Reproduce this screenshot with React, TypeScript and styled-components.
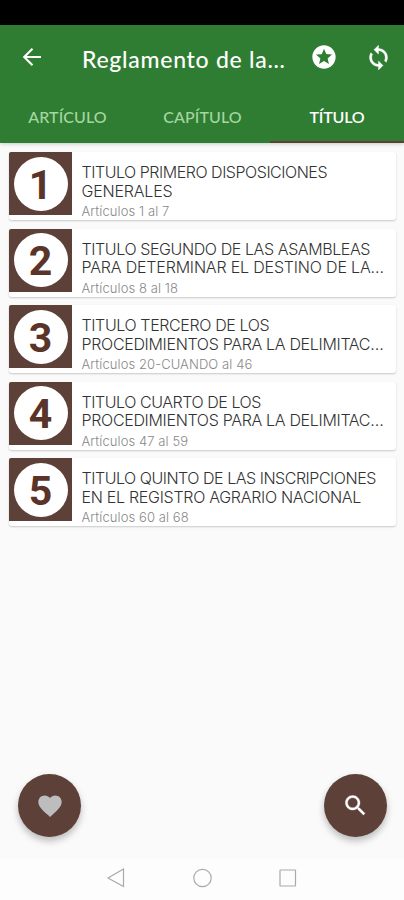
import React from 'react';
import styled, { createGlobalStyle } from 'styled-components';

const GlobalStyle = createGlobalStyle`
  * { box-sizing: border-box; }
  body { margin: 0; background: #fafafa; }
`;

const Screen = styled.div`
  width: 404px;
  height: 900px;
  display: flex;
  flex-direction: column;
  overflow: hidden;
  background: #fafafa;
  font-family: Inter, sans-serif;
`;

const StatusBar = styled.div`
  height: 25px;
  flex: none;
  background: #000;
`;

const Header = styled.header`
  height: 118px;
  flex: none;
  background: #2f7d32;
  color: #fff;
  box-shadow: 0 1px 4px rgba(0, 0, 0, 0.2);
`;

const Toolbar = styled.div`
  height: 64px;
  display: flex;
  align-items: center;
  justify-content: flex-start;
  padding-left: 20px;
`;

const Title = styled.h1`
  width: 218px;
  flex: none;
  margin: 3px 0 0 38px;
  font: 500 23px/30px Lato, sans-serif;
  letter-spacing: 0.72px;
  white-space: nowrap;
`;

const IconButton = styled.button<{ $gap?: number }>`
  display: flex;
  flex: none;
  padding: 0;
  margin: 0 0 0 ${(p) => p.$gap ?? 0}px;
  border: 0;
  background: none;
  color: inherit;
`;

const Tabs = styled.nav`
  height: 54px;
  display: grid;
  grid-template-columns: 135px 135px 134px;
`;

const Tab = styled.div<{ $active?: boolean }>`
  display: flex;
  align-items: center;
  justify-content: center;
  border-bottom: 2px solid ${(p) => (p.$active ? '#5d4037' : 'transparent')};
  color: ${(p) => (p.$active ? '#fff' : '#a5d6a0')};
  font: ${(p) => (p.$active ? 600 : 500)} 16px/20px Lato, sans-serif;
  letter-spacing: ${(p) => (p.$active ? '-0.2px' : '0.1px')};
  padding-top: 3px;
`;

const List = styled.main`
  flex: 1;
  display: flex;
  flex-direction: column;
  gap: 8.5px;
  padding: 9px 8px 0 9px;
`;

const Card = styled.article`
  height: 68px;
  flex: none;
  display: flex;
  background: #fff;
  border-radius: 3px;
  box-shadow: 0 1px 2px rgba(0, 0, 0, 0.2);
`;

const Badge = styled.div`
  width: 63px;
  height: 63px;
  flex: none;
  display: grid;
  place-items: center;
  background: #5d4037;
  border-radius: 2px 0 0 0;
`;

const Disc = styled.div`
  width: 54px;
  height: 54px;
  border-radius: 50%;
  background: #fff;
  color: #5a3329;
  text-align: center;
  font: 700 41px/56px Roboto, sans-serif;
`;

const CardText = styled.div`
  padding: 11px 0 0 9.5px;
  white-space: nowrap;
`;

const Line = styled.div<{ $track: number }>`
  color: #333;
  font-weight: 300;
  font-size: 16px;
  line-height: 18.6px;
  letter-spacing: ${(p) => p.$track}px;
`;

const Range = styled.div`
  margin-top: 2px;
  color: #888;
  font-weight: 300;
  font-size: 13px;
  line-height: 18px;
  letter-spacing: 0.09px;
`;

const Actions = styled.div`
  height: 85px;
  flex: none;
  display: flex;
  justify-content: space-between;
  padding: 0 17px 0 18px;
`;

const Fab = styled.button`
  width: 63px;
  height: 63px;
  padding: 0;
  display: grid;
  place-items: center;
  border: 0;
  border-radius: 50%;
  background: #5d4037;
  box-shadow: 0 4px 7px rgba(0, 0, 0, 0.25);
`;

const NavBar = styled.footer`
  height: 41px;
  flex: none;
  display: flex;
  justify-content: center;
  gap: 66px;
  padding-top: 9px;
  background: #fdfdfd;
`;

type Line = [text: string, track: number];

const items: { lines: Line[]; range: string }[] = [
  { lines: [['TITULO PRIMERO DISPOSICIONES', -0.47], ['GENERALES', -0.2]], range: 'Artículos 1 al 7' },
  { lines: [['TITULO SEGUNDO DE LAS ASAMBLEAS', -0.4], ['PARA DETERMINAR EL DESTINO DE LA…', -0.18]], range: 'Artículos 8 al 18' },
  { lines: [['TITULO TERCERO DE LOS', -0.38], ['PROCEDIMIENTOS PARA LA DELIMITAC…', -0.32]], range: 'Artículos 20-CUANDO al 46' },
  { lines: [['TITULO CUARTO DE LOS', -0.44], ['PROCEDIMIENTOS PARA LA DELIMITAC…', -0.32]], range: 'Artículos 47 al 59' },
  { lines: [['TITULO QUINTO DE LAS INSCRIPCIONES', -0.47], ['EN EL REGISTRO AGRARIO NACIONAL', -0.29]], range: 'Artículos 60 al 68' },
];

export default function App() {
  return (
    <Screen>
      <GlobalStyle />
      <StatusBar />
      <Header>
        <Toolbar>
          <IconButton aria-label="Volver">
            <svg width="24" height="24" viewBox="0 0 24 24" fill="none" stroke="#fff" strokeWidth="2.1">
              <path d="M21 12H4.5M12.5 3.7 4.2 12l8.3 8.3" />
            </svg>
          </IconButton>
          <Title>Reglamento de la…</Title>
          <IconButton $gap={10} aria-label="Favoritos">
            <svg width="28" height="28" viewBox="0 0 24 24" fill="#fff">
              <path d="M11.99 2C6.47 2 2 6.48 2 12s4.47 10 9.99 10C17.52 22 22 17.52 22 12S17.52 2 11.99 2zm4.24 16L12 15.45 7.77 18l1.12-4.81-3.73-3.23 4.92-.42L12 5l1.92 4.53 4.92.42-3.73 3.23L16.23 18z" />
            </svg>
          </IconButton>
          <IconButton $gap={26.5} aria-label="Actualizar">
            <svg width="27" height="27" viewBox="0 0 24 24" fill="#fff" stroke="#fff" strokeWidth=".35">
              <path d="M12 4V1L8 5l4 4V6c3.31 0 6 2.69 6 6 0 1.01-.25 1.97-.7 2.8l1.46 1.46C19.54 15.03 20 13.57 20 12c0-4.42-3.58-8-8-8zm0 14c-3.31 0-6-2.69-6-6 0-1.01.25-1.97.7-2.8L5.24 7.74C4.46 8.97 4 10.43 4 12c0 4.42 3.58 8 8 8v3l4-4-4-4v3z" />
            </svg>
          </IconButton>
        </Toolbar>
        <Tabs>
          <Tab>ARTÍCULO</Tab>
          <Tab>CAPÍTULO</Tab>
          <Tab $active>TÍTULO</Tab>
        </Tabs>
      </Header>
      <List>
        {items.map((item, i) => (
          <Card key={i}>
            <Badge><Disc>{i + 1}</Disc></Badge>
            <CardText>
              {item.lines.map(([text, track]) => <Line key={text} $track={track}>{text}</Line>)}
              <Range>{item.range}</Range>
            </CardText>
          </Card>
        ))}
      </List>
      <Actions>
        <Fab aria-label="Guardados">
          <svg width="28" height="28" viewBox="0 0 24 24" fill="#bdbdbd">
            <path d="m12 21.35-1.45-1.32C5.4 15.36 2 12.28 2 8.5 2 5.42 4.42 3 7.5 3c1.74 0 3.41.81 4.5 2.09C13.09 3.81 14.76 3 16.5 3 19.58 3 22 5.42 22 8.5c0 3.78-3.4 6.86-8.55 11.54L12 21.35z" />
          </svg>
        </Fab>
        <Fab aria-label="Buscar">
          <svg width="27" height="27" viewBox="0 0 24 24" fill="#fff" stroke="#fff" strokeWidth=".3">
            <path d="M15.5 14h-.79l-.28-.27C15.41 12.59 16 11.11 16 9.5 16 5.91 13.09 3 9.5 3S3 5.91 3 9.5 5.91 16 9.5 16c1.61 0 3.09-.59 4.23-1.57l.27.28v.79l5 4.99L20.49 19l-4.99-5zm-6 0C7.01 14 5 11.99 5 9.5S7.01 5 9.5 5 14 7.01 14 9.5 11.99 14 9.5 14z" />
          </svg>
        </Fab>
      </Actions>
      <NavBar>
        <svg width="20" height="20" viewBox="0 0 20 20" fill="none" stroke="#aaa" strokeWidth="1.2"><path d="M17.5 1v17.5L2 10z" /></svg>
        <svg width="20" height="20" viewBox="0 0 20 20" fill="none" stroke="#aaa" strokeWidth="1.2"><circle cx="10.5" cy="10" r="8.7" /></svg>
        <svg width="20" height="20" viewBox="0 0 20 20" fill="none" stroke="#aaa" strokeWidth="1.2"><rect x="2" y="2" width="15.5" height="16" rx=".6" /></svg>
      </NavBar>
    </Screen>
  );
}
